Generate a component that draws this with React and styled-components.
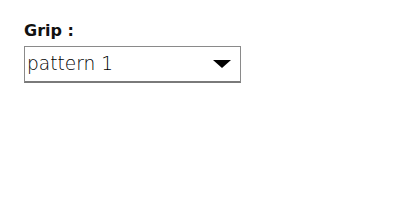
import React from "react"
import styled, { createGlobalStyle } from "styled-components"

const GlobalStyle = createGlobalStyle`
  html, body {
    margin: 0;
    padding: 0;
    background: #fff;
    font-family: "DejaVu Sans", sans-serif;
  }
`

const Page = styled.div`
  padding: 21px 24px;
`

const Field = styled.div`
  display: flex;
  flex-direction: column;
  gap: 6px;
`

const Label = styled.label`
  font-size: 16px;
  font-weight: bold;
  color: #111;
  line-height: 19px;
`

const Select = styled.div`
  box-sizing: border-box;
  width: 217px;
  height: 37px;
  border: 1px solid #8a8a8a;
  border-bottom: 2px solid #7a7a7a;
  display: flex;
  align-items: center;
  justify-content: space-between;
  padding: 0 9px 1px 2px;
  font-size: 18.6px;
  font-weight: 200;
  color: #000;
`

const Arrow = styled.span`
  width: 0;
  height: 0;
  border-left: 9px solid transparent;
  border-right: 9px solid transparent;
  border-top: 8px solid #000;
`

const App = () => (
  <>
    <GlobalStyle />
    <Page>
      <Field>
        <Label>Grip :</Label>
        <Select>
          <span>pattern 1</span>
          <Arrow />
        </Select>
      </Field>
    </Page>
  </>
)

export default App
